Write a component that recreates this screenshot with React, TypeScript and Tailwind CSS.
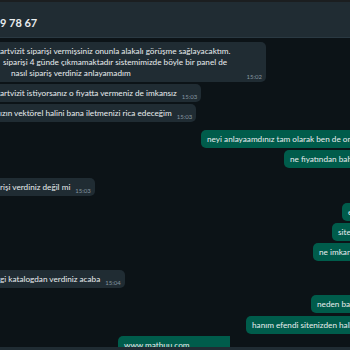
import React from 'react';

const font = { fontFamily: 'Lato, "Open Sans", sans-serif' };

const Incoming = ({ lines, time, mt, gap = 'ml-[5px]', indent = [] }: { lines: string[]; time: string; mt: string; gap?: string; indent?: string[] }) => (
  <div className={`${mt} flex`}>
    <div className="flex items-end bg-[#202c33] rounded-r-[5px] pt-[4px] pb-[3px] pr-[4px]">
      <div className="text-[8.2px] leading-[11px] text-[#e9edef] whitespace-nowrap">
        {lines.map((l, i) => (
          <div key={i} className={indent[i] || ''}>{l}</div>
        ))}
      </div>
      <span className={`${gap} mb-[-2px] text-[6px] leading-[8px] text-[#8696a0]`}>{time}</span>
    </div>
  </div>
);

const Outgoing = ({ text, ml, mt }: { text: string; ml: string; mt: string }) => (
  <div className={`${mt} flex`}>
    <div className={`${ml} shrink-0 bg-[#005c4b] rounded-l-[5px] pl-[6px] pr-10 pt-[4px] pb-[3px] text-[8.2px] leading-[11px] text-[#e9edef] whitespace-nowrap`}>
      {text}
    </div>
  </div>
);

export default function App() {
  return (
    <div className="w-[350px] h-[350px] overflow-hidden flex flex-col bg-[#0c1317]" style={font}>
      <div className="h-[2px] bg-[#1b1e20]" />
      <div className="h-[36px] bg-[#202c33] flex items-center border-b border-[#2a3942]">
        <span className="text-[11px] font-bold text-[#e9edef] leading-none mt-[5px]">9 78 67</span>
      </div>
      <div className="flex-1 overflow-hidden flex flex-col pt-[4px]">
        <Incoming
          mt="mt-0"
          gap="ml-[16px]"
          lines={[
            'artvizit siparişi vermişsiniz onunla alakalı görüşme sağlayacaktım.',
            'siparişi 4 günde çıkmamaktadır sistemimizde böyle bir panel de',
            'nasıl sipariş verdiniz anlayamadım',
          ]}
          indent={['', 'pl-[3px]', 'pl-[11px]']}
          time="15:02"
        />
        <Incoming mt="mt-[2px]" lines={['artvizit istiyorsanız o fiyatta vermeniz de imkansız']} time="15:03" />
        <Incoming mt="mt-[2px]" lines={['ızın vektörel halini bana iletmenizi rica edeceğim']} time="15:03" />
        <Outgoing mt="mt-[8px]" ml="ml-[201px]" text="neyi anlayaamdınız tam olarak ben de onu anlamadım" />
        <Outgoing mt="mt-[2px]" ml="ml-[284px]" text="ne fiyatından bahsediyorsunuz" />
        <Incoming mt="mt-[10px]" lines={['rişi verdiniz değil mi']} time="15:03" />
        <Outgoing mt="mt-[7px]" ml="ml-[342px]" text="evet" />
        <Outgoing mt="mt-[2px]" ml="ml-[332px]" text="siteden" />
        <Outgoing mt="mt-[2px]" ml="ml-[313px]" text="ne imkansız" />
        <Incoming mt="mt-[9px]" lines={['gi katalogdan verdiniz acaba']} time="15:04" />
        <Outgoing mt="mt-[7px]" ml="ml-[311px]" text="neden bahsediyorsunuz" />
        <Outgoing mt="mt-[3px]" ml="ml-[246px]" text="hanım efendi sitenizden hallettim" />
        <Outgoing mt="mt-[2px]" ml="ml-[118px]" text="www.mathuu.com" />
      </div>
      <div className="h-[3px] bg-[#202c33]" />
    </div>
  );
}
